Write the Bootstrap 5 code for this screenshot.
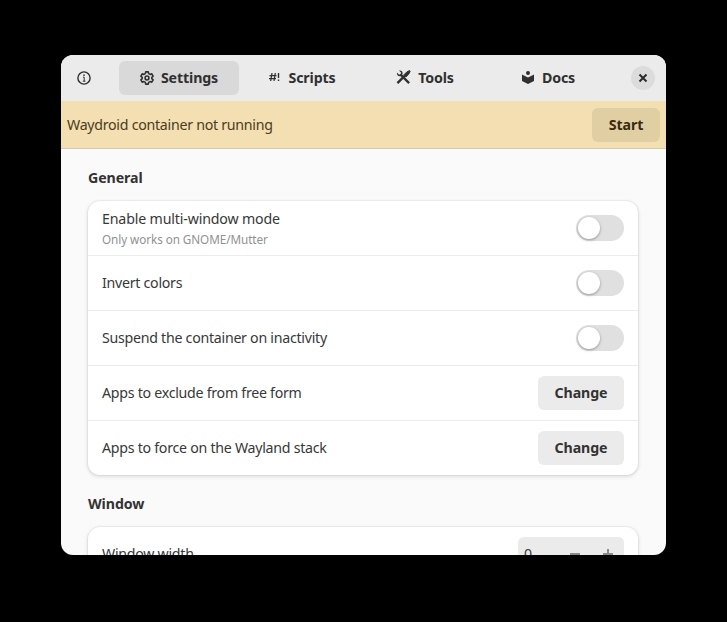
<!DOCTYPE html>
<html lang="en">
<head>
<meta charset="utf-8">
<meta name="viewport" content="width=device-width, initial-scale=1">
<title>Waydroid Settings</title>
<link href="https://cdn.jsdelivr.net/npm/bootstrap@5.3.0/dist/css/bootstrap.min.css" rel="stylesheet">
<style>
body{background:#000;color:#333;font:14.2px/20px "Noto Sans","Open Sans",sans-serif;letter-spacing:-.27px}
.window{width:605px;height:500px;margin:55px 0 0 61px;background:#fafafa;border-radius:12px}
.headerbar{height:46px;background:#ebebeb;padding:0 11px 0 6px}
.info-btn{width:34px;height:34px;color:#303030}
.tabs{margin-left:18px;gap:3px}
.tabs .nav-link{width:120px;height:34px;padding:0;color:#303030;font-weight:700;letter-spacing:-.13px;border-radius:6px;gap:7px}
.tabs .nav-link.active{background:#d9d9d9;color:#303030}
.close-btn{width:24px;height:24px;background:#dcdcdc;color:#2b2b2b}
.notice{height:48px;background:#f3dfb1;border-bottom:1px solid #d9c9a3;color:#4a3c1c;padding:0 6px}
.notice .btn{--bs-btn-bg:#e1cfa4;--bs-btn-color:#3a2a10;width:68px}
.btn.flat{font:inherit;font-weight:700;letter-spacing:-.1px;height:34px;padding:0;border:0;border-radius:6px}
.content{padding:19px 28px 0 27px}
.section-title{font-size:14.2px;line-height:20px;font-weight:700;letter-spacing:-.1px;margin-bottom:13px}
.next-title{margin-top:19px}
.settings{border-radius:12px;background:#fff;box-shadow:0 0 0 1px rgba(0,0,0,.03),0 1px 3px 1px rgba(0,0,0,.08),0 2px 5px 1px rgba(0,0,0,.03)}
.settings .list-group-item{height:55px;padding:0 14px;border-color:#ececec;background:transparent;color:#383838;border-width:0 0 1px}
.settings .list-group-item:last-child{border:0;height:54px}
.row-title{letter-spacing:-.16px}
.subtitle{font-size:11.7px;line-height:16px;margin-top:2px;color:#919191;letter-spacing:-.06px}
.settings .form-switch{min-height:0;padding:0}
.settings .form-check-input{position:relative;width:48px;height:26px;margin:0;float:none;border:0;background:#e0e0e0;display:block}
.settings .form-check-input::after{content:"";position:absolute;left:2px;top:2px;width:22px;height:22px;border-radius:50%;background:#fff;box-shadow:0 1px 3px rgba(0,0,0,.35)}
.settings .btn{--bs-btn-bg:#ebebeb;--bs-btn-color:#333;width:86px}
.spin{width:106px;height:34px;background:#ebebeb;border-radius:6px;padding-left:6px}
.settings .spin .btn{width:33px;height:34px;color:#8a8a8a}
svg{display:block;flex:none}
</style>
<script src="https://cdn.jsdelivr.net/npm/bootstrap@5.3.0/dist/js/bootstrap.bundle.min.js"></script>
</head>
<body>
<main class="window overflow-hidden d-flex flex-column">
  <header class="headerbar d-flex align-items-center flex-shrink-0">
    <button class="info-btn btn border-0 p-0 d-flex align-items-center justify-content-center" aria-label="About">
      <svg width="16" height="16" viewBox="0 0 16 16" fill="none" stroke="currentColor"><circle cx="8" cy="8" r="6.1" stroke-width="1.4"/><path d="M7 7.2h1.2v4M6.8 11.2h2.6" stroke-width="1"/><circle cx="8" cy="5.1" r=".85" fill="currentColor" stroke="none"/></svg>
    </button>
    <nav class="nav nav-pills tabs flex-nowrap">
      <a class="nav-link active d-flex align-items-center justify-content-center" href="#">
        <svg width="14" height="14" viewBox="0 0 16 16" fill="none" stroke="currentColor" stroke-width="1.8" stroke-linejoin="round"><path d="M6.500 1h3l.4 2 1.600.9 2-.7L15 5.800l-1.500 1.400v1.600L15 10.200l-1.500 2.600-2-.7-1.600.9-.4 2h-3l-.4-2-1.600-.9-2 .7L1 10.200l1.500-1.400V7.200L1 5.800l1.500-2.600 2 .7L6.100 3z"/><circle cx="8" cy="8" r="2.200"/></svg>
        <span>Settings</span></a>
      <a class="nav-link d-flex align-items-center justify-content-center" href="#">
        <svg width="13" height="14" viewBox="0 0 13 14" fill="none" stroke="currentColor"><path d="M4 2L2.700 10M7.300 2L6 10M1.500 4.500H8.500M1 7.500H8" stroke-width="1.250"/><path d="M10.500 2v5M10.500 8.500v1.500" stroke-width="1.400"/></svg>
        <span>Scripts</span></a>
      <a class="nav-link d-flex align-items-center justify-content-center" href="#">
        <svg width="15" height="16" viewBox="0 0 16 16" fill="none" stroke="currentColor"><path d="M4.500 4L14 13.500" stroke-width="2.500"/><path d="M1.500 13.500L9.500 5.500" stroke-width="2.500"/><path d="M8.500 4.500l3-3L14.500 0 15 1l-1.500 3-3 3z" fill="currentColor" stroke-width="1"/><path d="M3.200 0l2.300 2.300-.5 1.700-1.700.5L1 2.200C.6 5 2.500 6.500 4.800 6L7 3.800C7.500 1.500 6-.4 3.200 0z" fill="currentColor" stroke="none"/></svg>
        <span>Tools</span></a>
      <a class="nav-link d-flex align-items-center justify-content-center" href="#">
        <svg width="14" height="14" viewBox="0 0 14 14" fill="currentColor"><circle cx="7" cy="2" r="2"/><path d="M1 3.500l6 3 6-3v6.500l-6 3-6-3z"/></svg>
        <span>Docs</span></a>
    </nav>
    <button class="close-btn btn border-0 p-0 rounded-circle d-flex align-items-center justify-content-center ms-auto" aria-label="Close">
      <svg width="10" height="10" viewBox="0 0 10 10" stroke="currentColor" stroke-width="2"><path d="M1.500 1.500l7 7M8.500 1.500l-7 7"/></svg>
    </button>
  </header>
  <div class="notice d-flex align-items-center justify-content-between flex-shrink-0">
    <span>Waydroid container not running</span>
    <button class="btn flat">Start</button>
  </div>
  <div class="content">
    <h2 class="section-title">General</h2>
    <ul class="list-group list-group-flush settings">
      <li class="list-group-item d-flex align-items-center justify-content-between"><div><div class="row-title">Enable multi-window mode</div><div class="subtitle">Only works on GNOME/Mutter</div></div><div class="form-switch"><label class="form-check-input" role="switch"></label></div></li>
      <li class="list-group-item d-flex align-items-center justify-content-between"><span>Invert colors</span><div class="form-switch"><label class="form-check-input" role="switch"></label></div></li>
      <li class="list-group-item d-flex align-items-center justify-content-between"><span>Suspend the container on inactivity</span><div class="form-switch"><label class="form-check-input" role="switch"></label></div></li>
      <li class="list-group-item d-flex align-items-center justify-content-between"><span>Apps to exclude from free form</span><button class="btn flat">Change</button></li>
      <li class="list-group-item d-flex align-items-center justify-content-between"><span>Apps to force on the Wayland stack</span><button class="btn flat">Change</button></li>
    </ul>
    <h2 class="section-title next-title">Window</h2>
    <ul class="list-group list-group-flush settings">
      <li class="list-group-item d-flex align-items-center justify-content-between"><span>Window width</span>
        <div class="spin d-flex align-items-center"><span class="flex-grow-1">0</span>
          <button class="btn border-0 p-0 d-flex align-items-center justify-content-center" aria-label="Decrease"><svg width="10" height="10" viewBox="0 0 10 10" stroke="currentColor" stroke-width="2"><path d="M0 5h10"/></svg></button>
          <button class="btn border-0 p-0 d-flex align-items-center justify-content-center" aria-label="Increase"><svg width="10" height="10" viewBox="0 0 10 10" stroke="currentColor" stroke-width="2"><path d="M0 5h10M5 0v10"/></svg></button>
        </div></li>
    </ul>
  </div>
</main>
</body>
</html>
